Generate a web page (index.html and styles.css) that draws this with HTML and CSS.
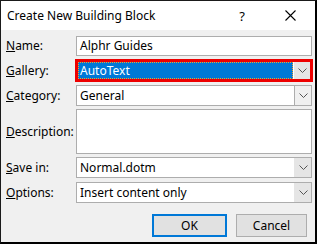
FILE: index.html
```html
<!DOCTYPE html>
<html>
<head>
<meta charset="utf-8">
<link rel="stylesheet" href="styles.css">
</head>
<body>
<div class="dialog">
  <div class="titlebar">
    <span class="title">Create New Building Block</span>
    <span class="help">?</span>
    <span class="close">
      <svg width="11" height="11" viewBox="0 0 11 11"><path d="M0.5 0.5L10.5 10.5M10.5 0.5L0.5 10.5" stroke="#000" stroke-width="1.1" fill="none"/></svg>
    </span>
  </div>
  <div class="content">
    <div class="row r-name">
      <label class="lbl"><u>N</u>ame:</label>
      <div class="textbox">Alphr Guides</div>
    </div>
    <div class="row r-gallery">
      <label class="lbl"><u>G</u>allery:</label>
      <div class="combo highlight">
        <div class="field selected"><span>AutoText</span></div>
        <div class="drop"><svg width="9" height="5" viewBox="0 0 9 5"><path d="M0.5 0.5L4.5 4.5L8.5 0.5" stroke="#555" stroke-width="1" fill="none"/></svg></div>
      </div>
    </div>
    <div class="row r-cat">
      <label class="lbl"><u>C</u>ategory:</label>
      <div class="combo">
        <div class="field">General</div>
        <div class="drop hover"><svg width="9" height="5" viewBox="0 0 9 5"><path d="M0.5 0.5L4.5 4.5L8.5 0.5" stroke="#555" stroke-width="1" fill="none"/></svg></div>
      </div>
    </div>
    <div class="row r-desc">
      <label class="lbl"><u>D</u>escription:</label>
      <div class="textarea"></div>
    </div>
    <div class="row r-save">
      <label class="lbl"><u>S</u>ave in:</label>
      <div class="combo">
        <div class="field">Normal.dotm</div>
        <div class="drop"><svg width="9" height="5" viewBox="0 0 9 5"><path d="M0.5 0.5L4.5 4.5L8.5 0.5" stroke="#555" stroke-width="1" fill="none"/></svg></div>
      </div>
    </div>
    <div class="row r-opt">
      <label class="lbl"><u>O</u>ptions:</label>
      <div class="combo">
        <div class="field">Insert content only</div>
        <div class="drop"><svg width="9" height="5" viewBox="0 0 9 5"><path d="M0.5 0.5L4.5 4.5L8.5 0.5" stroke="#555" stroke-width="1" fill="none"/></svg></div>
      </div>
    </div>
    <div class="buttons">
      <div class="btn ok">OK</div>
      <div class="btn cancel">Cancel</div>
    </div>
  </div>
</div>
</body>
</html>
```
FILE: styles.css
```css
* { box-sizing: border-box; }
html, body { margin: 0; padding: 0; }
body {
  font-family: "Noto Sans", "Open Sans", sans-serif;
  font-size: 12px;
  color: #000;
  width: 317px;
  height: 244px;
  overflow: hidden;
}
.dialog {
  width: 317px;
  height: 244px;
  border-top: 1px solid #1a1a1a;
  border-left: 1px solid #1a1a1a;
  border-right: 2px solid #000;
  border-bottom: 2px solid #000;
  background: #f0f0f0;
  display: flex;
  flex-direction: column;
}
.titlebar {
  height: 29px;
  background: #fff;
  display: flex;
  align-items: center;
  padding-left: 6px;
}
.title {
  flex: 1;
  font-size: 12px;
  line-height: 16px;
}
.help {
  width: 14px;
  font-size: 13px;
  margin-right: 36px;
  text-align: center;
}
.close {
  width: 11px;
  height: 11px;
  margin-right: 19px;
  display: flex;
}
.content {
  flex: 1;
  padding: 6px 3px 0 5px;
}
.row {
  display: grid;
  grid-template-columns: 70px 236px;
  align-items: center;
}
.lbl {
  line-height: 16px;
}
.r-gallery { margin-top: 4px; }
.r-cat { margin-top: 4px; }
.r-desc { margin-top: 3px; }
.r-save { margin-top: 3px; }
.r-opt { margin-top: 4px; }
.textbox {
  height: 20px;
  border: 1px solid #adadad;
  background: #fff;
  padding: 0 3px;
  line-height: 18px;
}
.textarea {
  height: 45px;
  border: 1px solid #adadad;
  background: #fff;
}
.combo {
  height: 21px;
  border: 1px solid #adadad;
  background: #fff;
  display: flex;
}
.combo .field {
  flex: 1;
  padding: 0 3px;
  line-height: 19px;
}
.drop {
  width: 17px;
  background: #e5e5e5;
  border-left: 1px solid #e5e5e5;
  display: flex;
  align-items: center;
  justify-content: center;
}
.drop.hover {
  border-left: 1px solid #adadad;
  background: #f0f0f0;
}
.combo.highlight {
  height: 23px;
  margin: -1px -1px -1px -1px;
  width: 238px;
  border: 3px solid #ee0000;
}
.combo.highlight .field {
  padding: 0;
}
.selected span {
  display: block;
  height: 17px;
  background: #0078d7;
  color: #fff;
  border: 1px dotted #f0a030;
  padding-left: 1px;
  line-height: 15px;
}
.combo.highlight .drop {
  border-left: 1px solid #fff;
}
.buttons {
  display: flex;
  justify-content: flex-end;
  gap: 9px;
  margin-top: 11px;
  padding-right: 5px;
}
.btn {
  height: 23px;
  background: #e1e1e1;
  border: 1px solid #adadad;
  display: flex;
  align-items: center;
  justify-content: center;
}
.ok {
  width: 75px;
  border: 2px solid #0078d7;
}
.cancel {
  width: 71px;
}
```
